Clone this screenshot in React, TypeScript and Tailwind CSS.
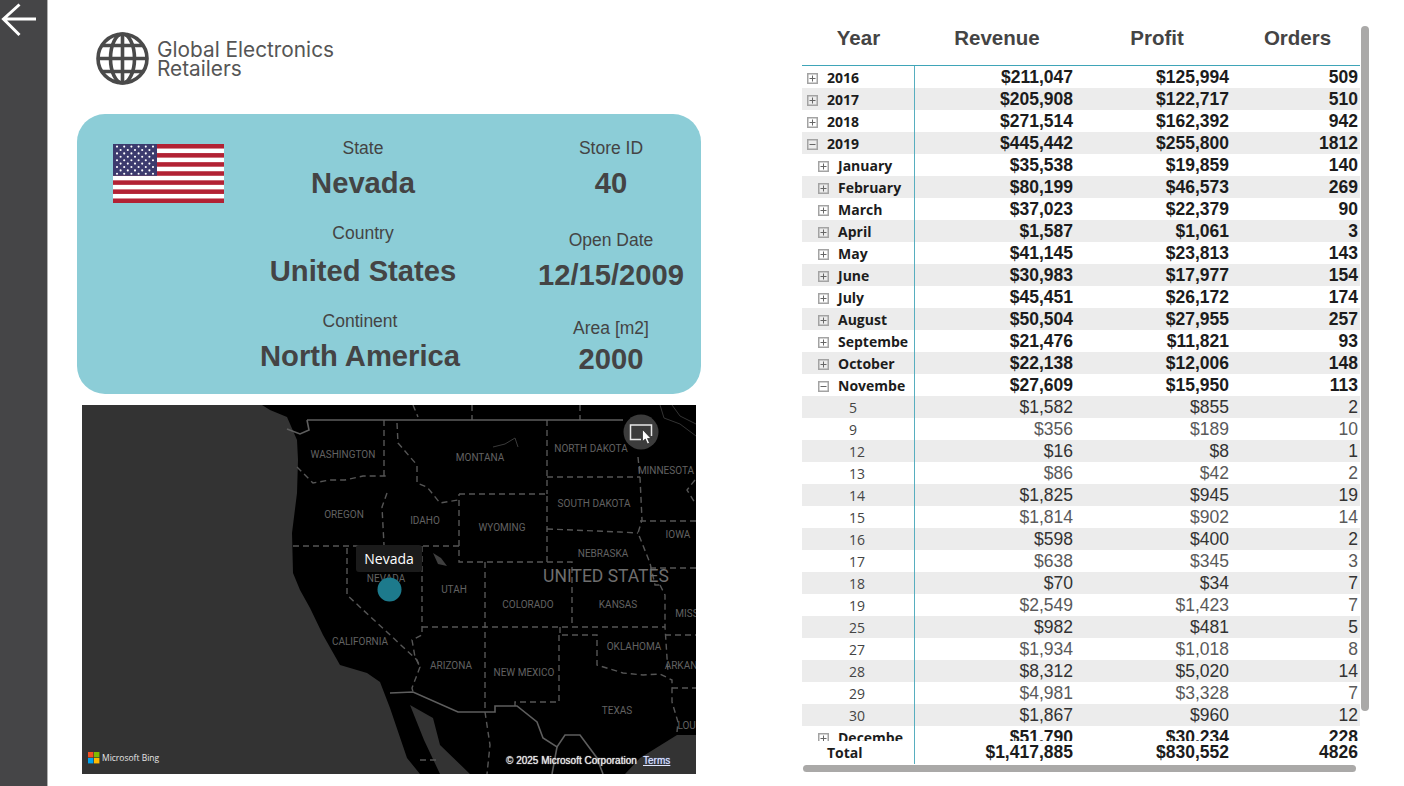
import React from 'react';

type RowKind = 'top' | 'day';

interface Row {
    label: string;
    revenue: string;
    profit: string;
    orders: string;
    kind: RowKind;
    depth: number;
    open?: boolean;
}

const top = (depth: number, label: string, revenue: string, profit: string, orders: string, open = false): Row => ({
    label, revenue, profit, orders, depth, open, kind: 'top',
});
const day = (label: string, revenue: string, profit: string, orders: string): Row => ({
    label, revenue, profit, orders, depth: 2, kind: 'day',
});

const rows: Row[] = [
    top(0, '2016', '$211,047', '$125,994', '509'),
    top(0, '2017', '$205,908', '$122,717', '510'),
    top(0, '2018', '$271,514', '$162,392', '942'),
    top(0, '2019', '$445,442', '$255,800', '1812', true),
    top(1, 'January', '$35,538', '$19,859', '140'),
    top(1, 'February', '$80,199', '$46,573', '269'),
    top(1, 'March', '$37,023', '$22,379', '90'),
    top(1, 'April', '$1,587', '$1,061', '3'),
    top(1, 'May', '$41,145', '$23,813', '143'),
    top(1, 'June', '$30,983', '$17,977', '154'),
    top(1, 'July', '$45,451', '$26,172', '174'),
    top(1, 'August', '$50,504', '$27,955', '257'),
    top(1, 'Septembe', '$21,476', '$11,821', '93'),
    top(1, 'October', '$22,138', '$12,006', '148'),
    top(1, 'Novembe', '$27,609', '$15,950', '113', true),
    day('5', '$1,582', '$855', '2'),
    day('9', '$356', '$189', '10'),
    day('12', '$16', '$8', '1'),
    day('13', '$86', '$42', '2'),
    day('14', '$1,825', '$945', '19'),
    day('15', '$1,814', '$902', '14'),
    day('16', '$598', '$400', '2'),
    day('17', '$638', '$345', '3'),
    day('18', '$70', '$34', '7'),
    day('19', '$2,549', '$1,423', '7'),
    day('25', '$982', '$481', '5'),
    day('27', '$1,934', '$1,018', '8'),
    day('28', '$8,312', '$5,020', '14'),
    day('29', '$4,981', '$3,328', '7'),
    day('30', '$1,867', '$960', '12'),
    top(1, 'Decembe', '$51,790', '$30,234', '228'),
];

const dashed = [
    '297,467 313,483 330,480 345,480 363,476 387,476',
    '384,420 384,476',
    '387,493 382,507 384,545',
    '293,546 460,546',
    '347,548 347,595 388,633 417,660 420,667 412,688 413,692',
    '422,546 422,635 412,640 415,657 420,667',
    '459,494 547,494 547,562 459,562 459,494',
    '547,562 572,562 572,627',
    '485,562 485,712',
    '422,627 665,627',
    '559,635 559,702 515,702 515,706',
    '560,627 560,635 597,635 597,665 623,673 643,675 660,674 672,680 672,702 678,722 677,732',
    '660,585 665,595 665,627 668,673',
    '665,635 696,635',
    '672,688 696,688',
    '397,423 398,443 417,465 417,483 427,487 440,503 458,500',
    '547,420 547,494',
    '547,477 640,477',
    '638,457 640,477 642,520 638,533 650,563 655,585 660,585',
    '547,529 620,532 638,533',
    '640,521 696,521',
    '650,568 696,568',
    '695,480 687,490 695,503',
    '472,405 472,420',
    '580,405 580,420',
    '413,405 418,417',
    '485,712 490,745 487,774',
    '420,760 440,760',
];

const solid = [
    '307,420 623,420',
    '287,429 300,434 309,430 307,420',
    '390,693 413,692 458,712 495,712 495,706 517,706 537,722 543,738 557,747 565,735 580,735 597,758 603,774',
    '557,747 552,774',
];

const labels: [string, number, number, number?][] = [
    ['WASHINGTON', 343, 458],
    ['OREGON', 344, 518],
    ['IDAHO', 425, 524],
    ['MONTANA', 480, 461],
    ['NORTH DAKOTA', 591, 452],
    ['MINNESOTA', 666, 474],
    ['WYOMING', 502, 531],
    ['SOUTH DAKOTA', 594, 507],
    ['IOWA', 678, 538],
    ['NEBRASKA', 603, 557],
    ['UTAH', 454, 593],
    ['COLORADO', 528, 608],
    ['KANSAS', 618, 608],
    ['MISS', 687, 617],
    ['OKLAHOMA', 634, 650],
    ['ARKAN', 681, 669],
    ['CALIFORNIA', 360, 645],
    ['ARIZONA', 451, 669],
    ['NEW MEXICO', 524, 676],
    ['TEXAS', 617, 714],
    ['LOUI', 688, 729],
    ['NEVADA', 386, 582],
    ['UNITED STATES', 606, 582, 17.5],
];

function Expander({ open }: { open?: boolean }) {
    return (
        <svg width="11" height="11" viewBox="0 0 11 11" className="shrink-0">
            <rect x="0.75" y="0.75" width="9.5" height="9.5" fill="none" stroke="#a3a3a3" strokeWidth="1.5" />
            <path d={open ? 'M2.5 5.5H8.5' : 'M2.5 5.5H8.5M5.5 2.5V8.5'} stroke="#666" strokeWidth="1" />
        </svg>
    );
}

function UsFlag() {
    const stars: [number, number][] = [];
    for (let r = 0; r < 9; r++) {
        const count = r % 2 === 0 ? 6 : 5;
        for (let c = 0; c < count; c++) {
            stars.push([(r % 2 === 0 ? 4 : 7.6) + c * 7.2, 2.6 + r * 3.4]);
        }
    }
    return (
        <svg width="111" height="59" viewBox="0 0 111 59" className="block shrink-0">
            <rect width="111" height="59" fill="#fff" />
            {Array.from({ length: 7 }).map((_, i) => (
                <rect key={i} y={i * 9.08} width="111" height="4.54" fill="#b22234" />
            ))}
            <rect width="44" height="31.8" fill="#3c3b6e" />
            {stars.map(([x, y], i) => (
                <circle key={i} cx={x} cy={y} r="1.05" fill="#fff" />
            ))}
        </svg>
    );
}

function Stat({ label, value, className, valueClass }: { label: string; value: string; className: string; valueClass: string }) {
    return (
        <div className={`flex flex-col items-center text-center text-[#444444] ${className}`}>
            <div className="h-[20px] text-[17.5px] leading-[20px] whitespace-nowrap">{label}</div>
            <div className={`h-[34px] text-[29.2px] leading-[34px] font-bold whitespace-nowrap ${valueClass}`}>{value}</div>
        </div>
    );
}

function StoreMap() {
    return (
        <div className="relative mt-[11px] ml-[5px] h-[369px] w-[614px] overflow-hidden bg-black font-['Liberation_Sans',sans-serif]">
            <svg width="614" height="369" viewBox="82 405 614 369" className="block">
                <rect x="82" y="405" width="614" height="369" fill="#000" />
                <path
                    d="M82 405H262L270 410L287 417L297 440L298 460L297 493L292 533L293 573L300 590L310 608L323 635L340 665L367 673L380 682L390 708L407 758L420 774H82Z"
                    fill="#333"
                />
                <path d="M410 705L433 718L440 745L470 774H440L424 740Z" fill="#333" />
                <path d="M696 735H677L640 758L625 774H696Z" fill="#333" />
                <path d="M433 553L441 558L447 566L438 564Z" fill="#3f3f3f" />
                <path d="M493 447L505 444L515 438L518 447" fill="none" stroke="#3a3a3a" strokeWidth="1" />
                <path d="M660 405L664 418L680 424L696 436M672 405L680 416L696 424" fill="none" stroke="#333" strokeWidth="1" />
                {dashed.map((p, i) => (
                    <polyline key={i} points={p} fill="none" stroke="#565656" strokeWidth="1.4" strokeDasharray="6 4" />
                ))}
                {solid.map((p, i) => (
                    <polyline key={i} points={p} fill="none" stroke="#5e5e5e" strokeWidth="1.6" />
                ))}
                {labels.map(([text, x, y, size]) => (
                    <text
                        key={text}
                        x={x}
                        y={y}
                        textAnchor="middle"
                        fontFamily="Roboto, sans-serif"
                        fontSize={size ?? 10}
                        fill={size ? '#6e6e6e' : '#626262'}
                    >
                        {text}
                    </text>
                ))}
                <circle cx="389.5" cy="589.5" r="12" fill="#1d7a8c" />
                <circle cx="641" cy="432" r="17.5" fill="#3c3c3c" />
                <path d="M651.5 436V425H630.5V439.5H641" fill="none" stroke="#e8e8e8" strokeWidth="1.5" />
                <path d="M642.5 429.5V441.5L645.3 439L647.5 444L649.5 443L647.5 438.5H651Z" fill="#fff" stroke="#222" strokeWidth="0.7" />
                <g>
                    <rect x="88" y="752" width="5.4" height="5.4" fill="#f25022" />
                    <rect x="94" y="752" width="5.4" height="5.4" fill="#7fba00" />
                    <rect x="88" y="758" width="5.4" height="5.4" fill="#00a4ef" />
                    <rect x="94" y="758" width="5.4" height="5.4" fill="#ffb900" />
                </g>
            </svg>

            <div className="absolute left-[274px] top-[140px] flex h-[27px] w-[66px] items-center justify-center rounded-[3px] bg-[#1b1b1b] font-['Open_Sans',sans-serif] text-[14px] text-white">
                Nevada
            </div>
            <div className="absolute left-[20px] top-[346px] font-['Open_Sans',sans-serif] text-[8.5px] leading-[14px] whitespace-nowrap text-[#e6e6e6]">
                Microsoft Bing
            </div>
            <div className="absolute left-[424px] top-[349px] text-[10px] leading-[14px] whitespace-nowrap text-[#e8e8e8] [text-shadow:0_0_1px_#ffffff]">
                © 2025 Microsoft Corporation
            </div>
            <div className="absolute left-[561px] top-[349px] text-[10px] leading-[14px] text-[#dfe6ff] underline [text-shadow:0_0_1px_#8fa4ff]">Terms</div>
        </div>
    );
}

function TableRow({ row, shaded }: { row: Row; shaded: boolean }) {
    const isDay = row.kind === 'day';
    const numClass = isDay
        ? `font-normal ${shaded ? 'text-[#333333]' : 'text-[#5a5a5a]'}`
        : 'font-bold text-[#1c1c1c]';
    return (
        <div
            className={`grid h-[22px] grid-cols-[113px_164px_156px_125px] items-center text-[17.5px] leading-[22px] font-['Liberation_Sans',sans-serif] ${
                shaded ? 'bg-[#ececec]' : 'bg-white'
            }`}
        >
            <div
                className={`flex h-[22px] items-center overflow-hidden border-r border-[#57aebf] pt-[2px] font-['Open_Sans',sans-serif] whitespace-nowrap ${
                    row.depth === 0 ? 'pl-[5px]' : row.depth === 1 ? 'pl-[16px]' : 'pl-[47px]'
                }`}
            >
                {!isDay && <Expander open={row.open} />}
                <span
                    className={
                        isDay
                            ? 'text-[14px] text-[#444444]'
                            : 'ml-[9px] text-[14px] font-bold text-[#1c1c1c]'
                    }
                >
                    {row.label}
                </span>
            </div>
            <div className={`pr-[6px] text-right ${numClass}`}>{row.revenue}</div>
            <div className={`pr-[6px] text-right ${numClass}`}>{row.profit}</div>
            <div className={`pr-[2px] text-right ${numClass}`}>{row.orders}</div>
        </div>
    );
}

function MatrixTable() {
    return (
        <div className="flex flex-col pt-[26px]">
            <div className="flex">
                <div className="h-[738px] w-[558px]">
                    <div className="grid h-[40px] grid-cols-[113px_164px_156px_125px] items-center border-b border-[#3fa5b8] pb-[16px] text-center font-['Liberation_Sans',sans-serif] text-[20.5px] leading-[24px] font-bold text-[#444444]">
                        <div>Year</div>
                        <div>Revenue</div>
                        <div>Profit</div>
                        <div>Orders</div>
                    </div>
                    <div className="h-[675px] overflow-hidden">
                        {rows.map((row, i) => (
                            <TableRow key={row.label + i} row={row} shaded={i % 2 === 1} />
                        ))}
                    </div>
                    <div className="grid h-[23px] grid-cols-[113px_164px_156px_125px] items-start bg-white font-['Liberation_Sans',sans-serif] text-[17.5px] leading-[22px] font-bold text-[#1c1c1c]">
                        <div className="h-[23px] border-r border-[#57aebf] pl-[25px] font-['Open_Sans',sans-serif] text-[14px] leading-[23px]">
                            Total
                        </div>
                        <div className="pr-[6px] text-right">$1,417,885</div>
                        <div className="pr-[6px] text-right">$830,552</div>
                        <div className="pr-[2px] text-right">4826</div>
                    </div>
                </div>
                <div className="ml-[1px] h-[685px] w-[8px] rounded-[4px] bg-[#aaa9a8]" />
            </div>
            <div className="mt-[1px] ml-[1px] h-[7px] w-[553px] rounded-[4px] bg-[#aaa9a8]" />
        </div>
    );
}

export default function App() {
    return (
        <div className="flex h-[786px] w-[1404px] overflow-hidden bg-white font-['Liberation_Sans',sans-serif]">
            <div className="h-full w-[48px] shrink-0 border-r border-[#b0b0b0] bg-[#454547]">
                <svg width="40" height="40" viewBox="0 0 40 40" className="block">
                    <path d="M36 19H4M19.5 4.5L3.5 19L19.5 35" fill="none" stroke="#fff" strokeWidth="3" />
                </svg>
            </div>

            <div className="w-[754px] shrink-0 pl-[29px]">
                <div className="mt-[32px] ml-[19px] flex h-[53px] items-center">
                    <svg width="53" height="53" viewBox="0 0 53 53" className="shrink-0">
                        <g fill="none" stroke="#4a4a4a" strokeWidth="3.6">
                            <circle cx="26.5" cy="26.5" r="24.5" />
                            <ellipse cx="26.5" cy="26.5" rx="12" ry="24.5" />
                            <path d="M26.5 2V51M2 26.5H51M6 13.5H47M6 39.5H47" />
                        </g>
                    </svg>
                    <div className="ml-[8px] font-['Inter',sans-serif] text-[20.8px] leading-[19px] font-normal text-[#555555]">
                        <div>Global Electronics</div>
                        <div>Retailers</div>
                    </div>
                </div>

                <div className="mt-[29px] flex h-[280px] w-[624px] rounded-[28px] bg-[#8ccdd7]">
                    <div className="mt-[30px] ml-[36px]">
                        <UsFlag />
                    </div>
                    <div className="ml-[26px] flex w-[226px] flex-col pt-[24px]">
                        <Stat label="State" value="Nevada" className="" valueClass="mt-[8px]" />
                        <Stat label="Country" value="United States" className="mt-[23px]" valueClass="mt-[11px]" />
                        <Stat label="Continent" value="North America" className="mt-[23px] -translate-x-[3px]" valueClass="mt-[8px]" />
                    </div>
                    <div className="ml-[45px] flex w-[180px] flex-col pt-[24px]">
                        <Stat label="Store ID" value="40" className="" valueClass="mt-[8px]" />
                        <Stat label="Open Date" value="12/15/2009" className="mt-[30px]" valueClass="mt-[8px]" />
                        <Stat label="Area [m2]" value="2000" className="mt-[26px]" valueClass="mt-[4px]" />
                    </div>
                </div>

                <StoreMap />
            </div>

            <MatrixTable />
        </div>
    );
}
